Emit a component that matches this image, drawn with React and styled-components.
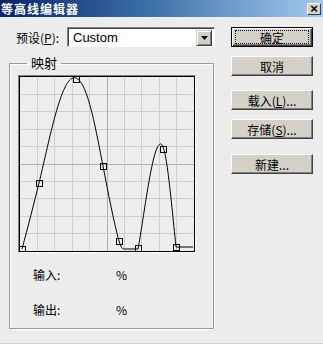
import React from "react";
import styled, {createGlobalStyle} from "styled-components";

const GlobalStyle = createGlobalStyle`
  html, body {
    margin: 0;
    padding: 0;
    background: #ececec;
  }
  body {
    font-family: "Noto Sans CJK SC", "Liberation Sans", sans-serif;
    font-size: 12px;
    color: #000;
  }
`;

const points = [
  [2, 172],
  [19, 106],
  [56, 2],
  [83, 89],
  [99, 164],
  [118, 171],
  [143, 72],
  [156, 170],
];

const curve =
  "M2,172 C8,150 14,126 19,106 C28,70 40,4 53,1 C60,-1 66,12 72,36 " +
  "C76,52 80,74 83,89 C88,115 94,146 99,164 C101,170 102,172 104,172 " +
  "L118,172 C124,140 132,70 140,67 C146,64 150,112 156,170 L173,170";

function App() {
  const grid = [];
  for (let i = 1; i < 10; i++) {
    const p = i * 17.4;
    const c = i === 5 ? "#adadad" : "#cdcdcd";
    grid.push(<line key={"v" + i} x1={p} y1={0} x2={p} y2={174} stroke={c} strokeWidth="1" shapeRendering="crispEdges" />);
    grid.push(<line key={"h" + i} x1={0} y1={p} x2={174} y2={p} stroke={c} strokeWidth="1" shapeRendering="crispEdges" />);
  }

  return (
    <Dialog>
      <GlobalStyle />
      <TitleBar>
        <Title>等高线编辑器</Title>
        <CloseButton>×</CloseButton>
      </TitleBar>
      <Body>
        <LeftColumn>
          <PresetRow>
            <Label>
              预设(<u>P</u>):
            </Label>
            <Select>
              <SelectText>Custom</SelectText>
              <DropButton>
                <svg width="7" height="4" viewBox="0 0 7 4">
                  <path d="M0,0 L7,0 L3.5,4 Z" fill="#000" />
                </svg>
              </DropButton>
            </Select>
          </PresetRow>
          <Group>
            <Legend>映射</Legend>
            <Graph>
              <svg width="174" height="174" viewBox="0 0 174 174">
                {grid}
                <path d={curve} fill="none" stroke="#000" strokeWidth="1" />
                {points.map(([x, y], i) => (
                  <rect key={i} x={x - 3} y={y - 3} width="6" height="6" fill="none" stroke="#000" strokeWidth="1" shapeRendering="crispEdges" />
                ))}
              </svg>
            </Graph>
            <ReadoutGrid>
              <span>输入:</span>
              <span>%</span>
              <span>输出:</span>
              <span>%</span>
            </ReadoutGrid>
          </Group>
        </LeftColumn>
        <ButtonColumn>
          <Button $default>
            <Focus>确定</Focus>
          </Button>
          <Button $top={9}>取消</Button>
          <Button $top={14}>
            载入(<u>L</u>)...
          </Button>
          <Button $top={9}>
            存储(<u>S</u>)...
          </Button>
          <Button $top={15}>新建...</Button>
        </ButtonColumn>
      </Body>
    </Dialog>
  );
}

const Dialog = styled.div`
  width: 323px;
  height: 344px;
  box-sizing: border-box;
  border-bottom: 1px solid #d2d2d2;
  overflow: hidden;
`;

const TitleBar = styled.div`
  height: 17px;
  display: flex;
  align-items: center;
  justify-content: space-between;
  padding: 0 2px 0 1px;
  background: linear-gradient(90deg, #0a246a 0%, #3a6ea5 45%, #a6caf0 100%);
`;

const Title = styled.div`
  color: #fff;
  font-weight: bold;
  font-size: 12px;
  line-height: normal;
  letter-spacing: 1px;
`;

const CloseButton = styled.div`
  width: 14px;
  height: 12px;
  box-sizing: border-box;
  background: #d4d0c8;
  border: 1px solid;
  border-color: #fff #404040 #404040 #fff;
  font-family: "Liberation Sans", sans-serif;
  font-weight: bold;
  font-size: 13px;
  line-height: 9px;
  text-align: center;
`;

const Body = styled.div`
  display: flex;
  padding-top: 10px;
`;

const LeftColumn = styled.div`
  width: 231px;
  display: flex;
  flex-direction: column;
`;

const PresetRow = styled.div`
  display: flex;
  align-items: center;
  padding-left: 16px;
  height: 20px;
`;

const Label = styled.span`
  width: 51px;
  font-size: 12px;
  white-space: nowrap;
`;

const Select = styled.div`
  width: 148px;
  height: 20px;
  box-sizing: border-box;
  display: flex;
  align-items: center;
  background: #fff;
  border: 1px solid;
  border-color: #808080 #fff #fff #808080;
  box-shadow: inset 1px 1px 0 #404040;
  padding: 2px 2px 1px 2px;
`;

const SelectText = styled.span`
  flex: 1;
  font-family: "Liberation Sans", sans-serif;
  font-size: 13px;
  padding-left: 3px;
`;

const DropButton = styled.div`
  width: 16px;
  height: 16px;
  box-sizing: border-box;
  display: flex;
  align-items: center;
  justify-content: center;
  background: #d4d0c8;
  border: 1px solid;
  border-color: #d4d0c8 #404040 #404040 #d4d0c8;
  box-shadow: inset 1px 1px 0 #fff, inset -1px -1px 0 #808080;
`;

const Group = styled.fieldset`
  margin: 9px 0 0 9px;
  width: 205px;
  height: 273px;
  box-sizing: border-box;
  padding: 5px 0 0 8px;
  border: 1px solid #9a9a9a;
  box-shadow: inset 1px 1px 0 #fff, 1px 1px 0 #fff;
`;

const Legend = styled.legend`
  margin-left: 9px;
  padding: 0 4px;
  font-size: 13px;
  line-height: 14px;
`;

const Graph = styled.div`
  width: 178px;
  height: 178px;
  box-sizing: border-box;
  border: 1px solid;
  border-color: #808080 #fff #fff #808080;
  svg {
    display: block;
    border: 1px solid #000;
    background: #ededed;
  }
`;

const ReadoutGrid = styled.div`
  display: grid;
  grid-template-columns: 83px auto;
  row-gap: 21px;
  padding: 15px 0 0 15px;
  font-size: 12px;
  line-height: 14px;
`;

const ButtonColumn = styled.div`
  display: flex;
  flex-direction: column;
`;

const Button = styled.div`
  width: 82px;
  height: 20px;
  margin-top: ${(p) => p.$top || 0}px;
  box-sizing: border-box;
  display: flex;
  align-items: center;
  justify-content: center;
  background: #d4d0c8;
  font-size: 12px;
  border: 1px solid;
  border-color: ${(p) => (p.$default ? "#000" : "#fff #404040 #404040 #fff")};
  box-shadow: ${(p) =>
    p.$default
      ? "inset 1px 1px 0 #fff, inset -1px -1px 0 #404040, inset -2px -2px 0 #808080"
      : "inset -1px -1px 0 #808080"};
`;

const Focus = styled.span`
  width: 72px;
  height: 12px;
  display: flex;
  align-items: center;
  justify-content: center;
  border: 1px dotted #000;
`;

export default App;
